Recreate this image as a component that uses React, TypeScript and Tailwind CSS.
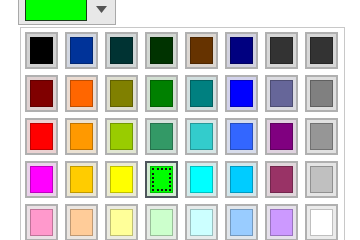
import React from "react";

const rows: string[][] = [
  ["#000000", "#003399", "#003333", "#003300", "#663300", "#000080", "#333333", "#333333"],
  ["#800000", "#ff6600", "#808000", "#008000", "#008080", "#0000ff", "#666699", "#808080"],
  ["#ff0000", "#ff9900", "#99cc00", "#339966", "#33cccc", "#3366ff", "#800080", "#969696"],
  ["#ff00ff", "#ffcc00", "#ffff00", "#00ff00", "#00ffff", "#00ccff", "#993366", "#c0c0c0"],
  ["#ff99cc", "#ffcc99", "#ffff99", "#ccffcc", "#ccffff", "#99ccff", "#cc99ff", "#ffffff"],
];

const selected = "#00ff00";

function Cell({ color }: { color: string }) {
  const isSel = color === selected;
  return (
    <div
      className={
        "h-[37px] w-[33px] border-2 p-[3px] " +
        (isSel ? "border-[#4e565c]" : "border-[#b0b0b0]")
      }
      style={{ backgroundColor: `color-mix(in srgb, ${color} 10%, #e9e9e9)` }}
    >
      <div
        className="relative h-full w-full border"
        style={{
          backgroundColor: color,
          borderColor: `color-mix(in srgb, ${color} 75%, #000000)`,
        }}
      >
        {isSel && (
          <div className="absolute inset-[1px] border-2 border-dotted border-[#111111]" />
        )}
      </div>
    </div>
  );
}

export default function App() {
  return (
    <div className="h-[240px] w-[360px] overflow-hidden bg-white">
      <div className="ml-[18px] -mt-[8px] flex h-[33px] w-[98px] items-start border border-[#a9a9a9] bg-[#e8e8e8] pl-[6px] pt-[4px]">
        <div className="h-[24px] w-[62px] border border-[#1b3a1b] bg-[#00ff00]" />
        <div className="flex flex-1 justify-center pt-[9px]">
          <svg width="11" height="7" viewBox="0 0 11 7">
            <polygon points="0,0 11,0 5.5,7" fill="#555555" />
          </svg>
        </div>
      </div>
      <div className="ml-[20px] mt-[2px] w-[325px] border border-[#c8c8c8] bg-white pl-[4px] pt-[4px] pb-[10px]">
        <div className="grid grid-cols-[repeat(8,33px)] gap-x-[7px] gap-y-[6px]">
          {rows.flat().map((c, i) => (
            <Cell key={i} color={c} />
          ))}
        </div>
      </div>
    </div>
  );
}
